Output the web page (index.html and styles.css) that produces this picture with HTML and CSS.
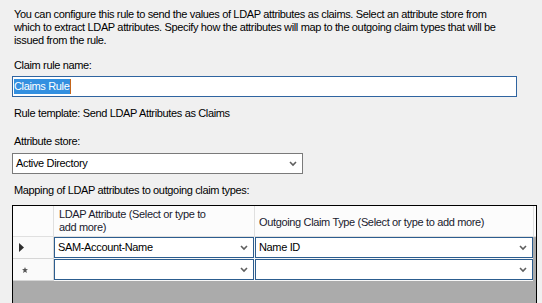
FILE: index.html
```html
<!DOCTYPE html>
<html lang="en">
<head>
    <meta charset="UTF-8">
    <title>Send LDAP Attributes as Claims</title>
    <link rel="stylesheet" href="styles.css">
</head>
<body>
    <div class="page">
        <p class="intro">You can configure this rule to send the values of LDAP attributes as claims. Select an attribute store from<br>which to extract LDAP attributes. Specify how the attributes will map to the outgoing claim types that will be<br>issued from the rule.</p>

        <p class="label label-name">Claim rule name:</p>
        <div class="textbox"><span class="selected">Claims Rule</span><span class="caret"></span></div>

        <p class="label label-template">Rule template: Send LDAP Attributes as Claims</p>

        <p class="label label-store">Attribute store:</p>
        <div class="combo">
            <span>Active Directory</span>
            <svg class="chevron" width="8" height="6" viewBox="0 0 8 6"><polyline points="1,1 4,4 7,1" fill="none" stroke="#5f5f5f" stroke-width="1.6"/></svg>
        </div>

        <p class="label label-mapping">Mapping of LDAP attributes to outgoing claim types:</p>
        <div class="grid">
            <div class="grid-head">
                <div class="head-corner"></div>
                <div class="head-cell head-attr">LDAP Attribute (Select or type to<br>add more)</div>
                <div class="head-cell head-type">Outgoing Claim Type (Select or type to add more)</div>
            </div>
            <div class="grid-row">
                <div class="row-head">
                    <svg width="6" height="9" viewBox="0 0 6 9"><polygon points="0,0 5,4.5 0,9" fill="#2e2e2e"/></svg>
                </div>
                <div class="cell cell-attr">
                    <span>SAM-Account-Name</span>
                    <svg class="chevron" width="8" height="6" viewBox="0 0 8 6"><polyline points="1,1 4,4 7,1" fill="none" stroke="#5f5f5f" stroke-width="1.6"/></svg>
                </div>
                <div class="cell cell-type">
                    <span>Name ID</span>
                    <svg class="chevron" width="8" height="6" viewBox="0 0 8 6"><polyline points="1,1 4,4 7,1" fill="none" stroke="#5f5f5f" stroke-width="1.6"/></svg>
                </div>
            </div>
            <div class="grid-row">
                <div class="row-head">
                    <svg class="star" width="6" height="6" viewBox="0 0 6 6"><polygon points="3,0 3.8,2 6,2.2 4.3,3.6 4.9,6 3,4.7 1.1,6 1.7,3.6 0,2.2 2.2,2" fill="#555"/></svg>
                </div>
                <div class="cell cell-attr">
                    <span></span>
                    <svg class="chevron" width="8" height="6" viewBox="0 0 8 6"><polyline points="1,1 4,4 7,1" fill="none" stroke="#5f5f5f" stroke-width="1.6"/></svg>
                </div>
                <div class="cell cell-type">
                    <span></span>
                    <svg class="chevron" width="8" height="6" viewBox="0 0 8 6"><polyline points="1,1 4,4 7,1" fill="none" stroke="#5f5f5f" stroke-width="1.6"/></svg>
                </div>
            </div>
        </div>
    </div>
</body>
</html>
```

FILE: styles.css
```css
/* Dialog page */
body {
    margin: 0;
    height: 303px;
    overflow: hidden;
    background: #f0f0f0;
    font-family: "Liberation Sans", Arial, sans-serif;
    font-size: 11px;
    line-height: 13px;
    letter-spacing: -0.35px;
    color: #000;
}

.page {
    padding: 8px 5px 0 12px;
}

p {
    margin: 0;
}

.intro {
    padding-left: 2px;
    white-space: nowrap;
}

.label {
    padding-left: 2px;
}

.label-name {
    margin-top: 12px;
}

.label-template {
    margin-top: 10px;
}

.label-store {
    margin-top: 15px;
}

.label-mapping {
    margin-top: 10px;
}

/* Text box with the selected name */
.textbox {
    box-sizing: border-box;
    width: 505px;
    height: 21px;
    margin-top: 4px;
    padding: 2px 1px;
    border: 1px solid #2f64a0;
    background: #fff;
    display: flex;
    align-items: stretch;
}

.selected {
    background: #3390e0;
    color: #fff;
    line-height: 15px;
    padding-right: 1px;
}

.caret {
    width: 1px;
    background: #c4651a;
}

/* Combo box */
.combo {
    box-sizing: border-box;
    width: 291px;
    height: 21px;
    margin-top: 5px;
    padding: 0 5px 0 3px;
    border: 1px solid #7a7a7a;
    background: #fff;
    display: flex;
    align-items: center;
    justify-content: space-between;
}

/* Data grid */
.grid {
    margin-top: 8px;
    height: 98px;
    border: 1px solid #000;
    border-bottom: none;
    background: #ababab;
}

.grid-head {
    display: flex;
    height: 30px;
    background: #fcfcfc;
    border-bottom: 1px solid #e0e0e0;
}

.head-corner {
    box-sizing: border-box;
    width: 41px;
    border-right: 1px solid #e0e0e0;
}

.head-cell {
    box-sizing: border-box;
    border-right: 1px solid #e0e0e0;
    color: #1a1a2e;
}

.head-attr {
    width: 201px;
    padding: 2px 0 0 5px;
}

.head-type {
    width: 279px;
    padding: 10px 0 0 4px;
}

.grid-row {
    display: flex;
    width: 520px;
    height: 22px;
    background: #f7f7f7;
}

.row-head {
    box-sizing: border-box;
    width: 41px;
    border-right: 1px solid #d6d6d6;
    border-bottom: 1px solid #d6d6d6;
    background: #fafafa;
    display: flex;
    align-items: center;
    padding-left: 6px;
}

.row-head .star {
    margin-left: 3px;
}

.cell {
    box-sizing: border-box;
    height: 21px;
    border: 1px solid #2c5d8f;
    background: #fff;
    display: flex;
    align-items: center;
    justify-content: space-between;
    padding: 0 5px 0 3px;
}

.cell-attr {
    width: 200px;
}

.cell-type {
    width: 278px;
    margin-left: 1px;
}

.chevron {
    flex: none;
}
```
